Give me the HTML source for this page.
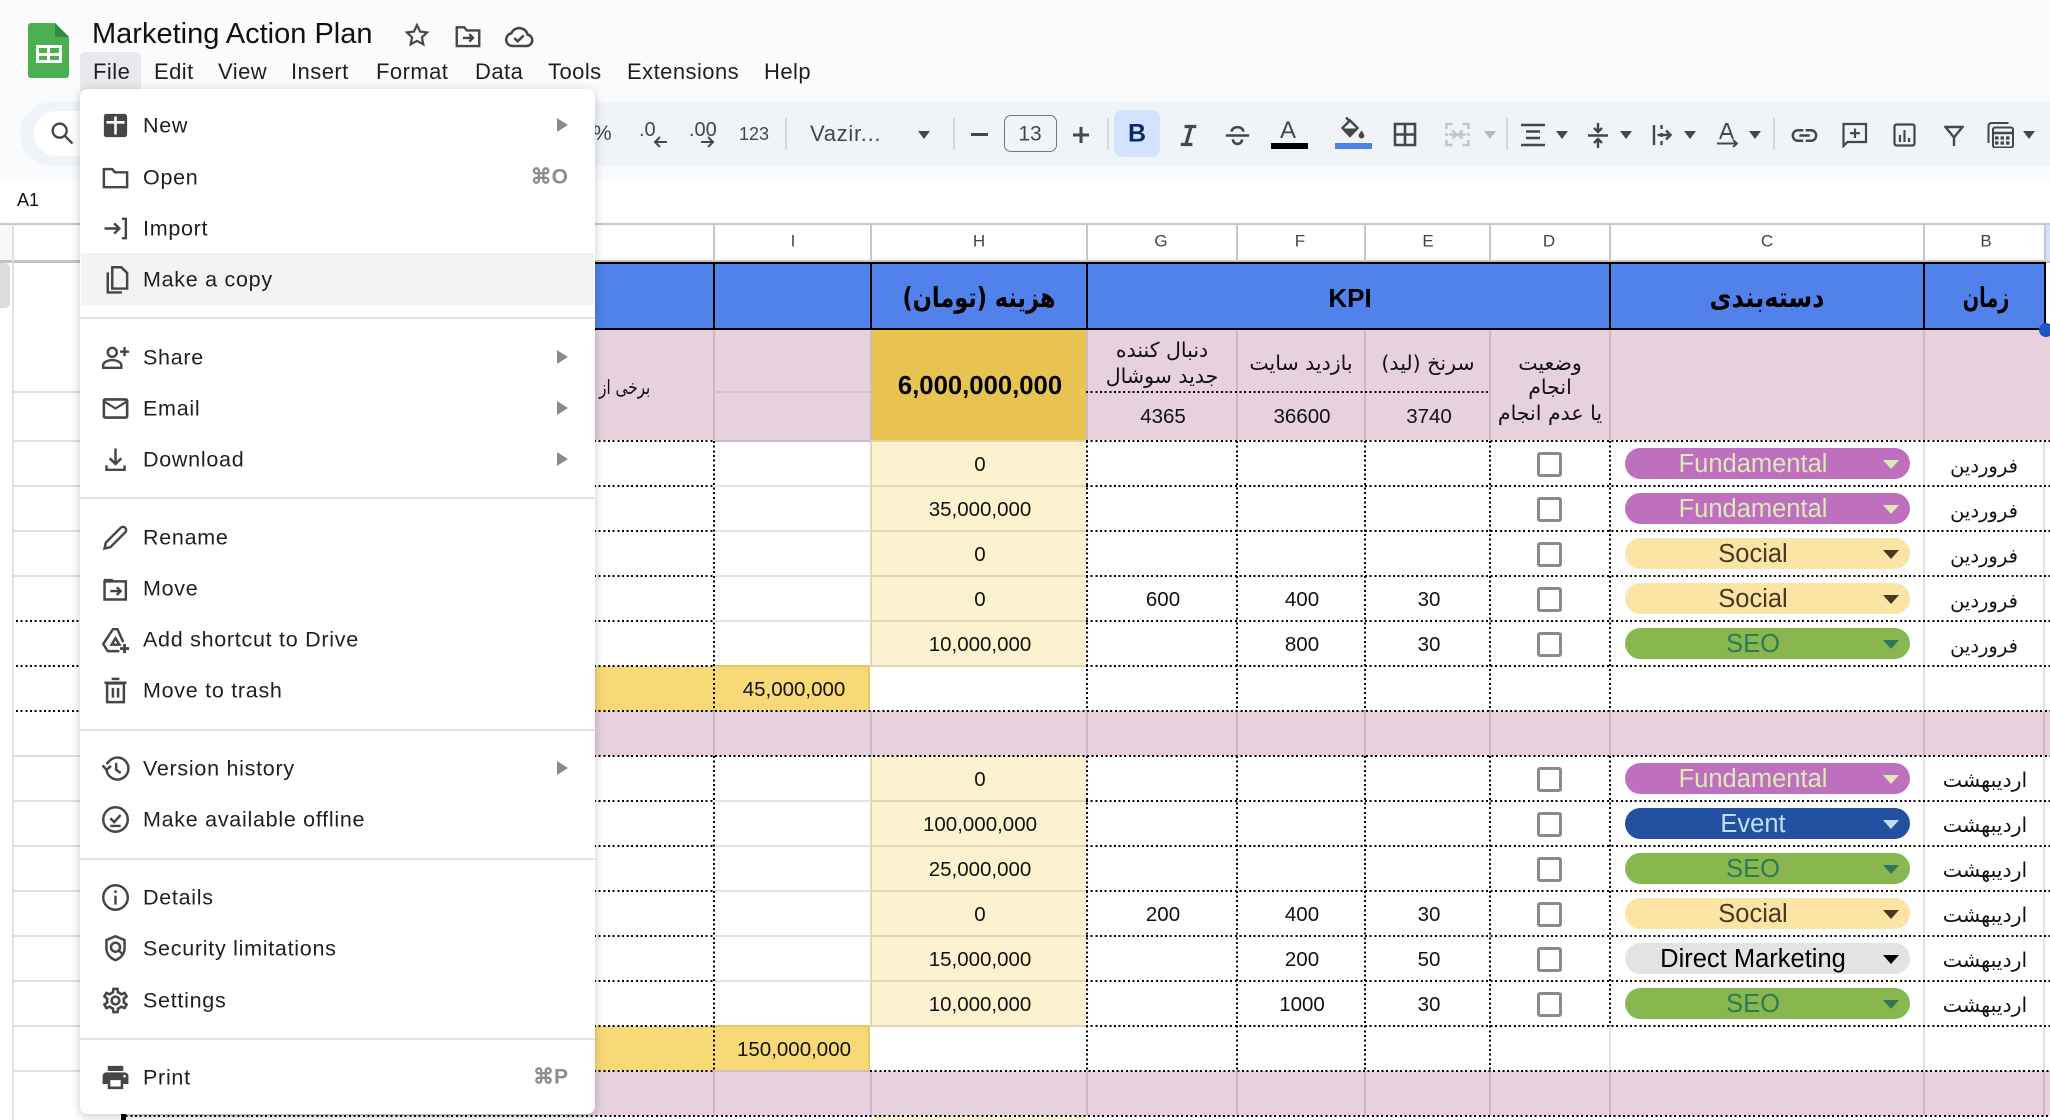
<!DOCTYPE html>
<html lang="en">
<head>
<meta charset="utf-8">
<title>Marketing Action Plan</title>
<style>
html,body{margin:0;padding:0;width:2050px;height:1120px;overflow:hidden;background:#fff}
body{position:relative;font-family:"Liberation Sans",sans-serif;color:#000}
div,span,svg{position:absolute;display:block}
svg *{position:static}
.t{white-space:nowrap;line-height:1}
.c{white-space:nowrap;line-height:1;transform:translate(-50%,-50%)}
.fa{font-family:"DejaVu Sans","Liberation Sans",sans-serif;direction:rtl}
.n{font-size:20.5px;color:#111;margin-top:1.3px}
.hb{font-weight:bold;font-size:24px;color:#000}
.fa14{font-size:20.5px;color:#111}
.mo{font-size:19.5px;color:#111}
.col{font-size:17px;color:#444;top:241px}
.dh{height:2px;background:repeating-linear-gradient(90deg,#000 0 2px,transparent 2px 4.65px)}
.dv{width:2px;background:repeating-linear-gradient(180deg,#000 0 2px,transparent 2px 4.65px)}
.pill{left:1625px;width:285px;height:31px;border-radius:15.5px;text-align:center;font-size:25.5px;line-height:32px;box-sizing:border-box;padding-right:29px;white-space:nowrap}
.pill:after{content:"";position:absolute;left:258px;top:12px;border-left:8px solid transparent;border-right:8px solid transparent;border-top:9px solid currentColor}
.fu{background:#be6fbe;color:#dde9b8}.so{background:#fbe4a4;color:#473822}.se{background:#88b750;color:#2d7a55}.ev{background:#2350a0;color:#bfe1f6}.dm{background:#e3e3e3;color:#000}
.cb{left:1537px;width:25px;height:25px;box-sizing:border-box;border:3px solid #8a8a8a;border-radius:3px;background:#fff}
.m{font-size:21.5px;letter-spacing:.72px;color:#1f1f1f;left:143px;white-space:nowrap;line-height:1;transform:translateY(-50%);margin-top:1px}
.mb{font-size:22px;letter-spacing:.45px;color:#1f1f1f;top:61px;white-space:nowrap;line-height:1}
.ar{left:557px;width:0;height:0;border-top:7px solid transparent;border-bottom:7px solid transparent;border-left:11px solid #8a8a8a;transform:translateY(-50%)}
.sc{font-size:21px;color:#8a8d91;right:1482px;white-space:nowrap;line-height:1;transform:translateY(-50%);font-weight:bold}
.sep{left:80px;width:515px;height:2px;background:#e3e3e3}
.mi{left:100px;width:31px;height:31px;fill:none;stroke:#444746;stroke-width:1.9}
.mif{left:100px;width:31px;height:31px;fill:#444746}
.tb{width:31px;height:31px;top:119.5px;fill:none;stroke:#444746;stroke-width:2}
.tbf{width:31px;height:31px;top:119.5px;fill:#444746}
.car{top:131px;width:0;height:0;border-left:6.5px solid transparent;border-right:6.5px solid transparent;border-top:8px solid #444746}
.vs{top:118px;width:2px;height:32px;background:#d5d8dc}
.ts{color:#444746;white-space:nowrap;line-height:1}
</style>
</head>
<body>

<div style="left:-1px;top:0;width:2052px;height:1120px">
<!-- Grid backgrounds -->
<div style="left:0;top:179px;width:2052px;height:941px;background:#fff"></div>
<div style="left:595px;top:263px;width:1450px;height:66px;background:#5182ec"></div>
<div style="left:595px;top:329px;width:1456px;height:111px;background:#e6d1dd"></div>
<div style="left:871px;top:329px;width:216px;height:111px;background:#e8c34f"></div>
<div style="left:871px;top:441px;width:216px;height:225px;background:#fdf2d0"></div>
<div style="left:871px;top:756px;width:216px;height:270px;background:#fdf2d0"></div>
<div style="left:871px;top:1117px;width:216px;height:3px;background:#fdf2d0"></div>
<div style="left:595px;top:666px;width:276px;height:45px;background:#f8d978"></div>
<div style="left:595px;top:1026px;width:276px;height:45px;background:#f8d978"></div>
<div style="left:595px;top:711px;width:1456px;height:45px;background:#e6d1dd"></div>
<div style="left:122px;top:1071px;width:1929px;height:45px;background:#e6d1dd"></div>

<!-- Column header -->
<div style="left:0;top:223px;width:2052px;height:2px;background:#c7c7c7"></div>
<div style="left:1px;top:225px;width:13px;height:36px;background:#f8f8f8"></div>
<div style="left:0;top:260px;width:2052px;height:3px;background:#c4c4c4"></div>
<div style="left:13px;top:223px;width:2px;height:897px;background:#e0e0e0"></div>
<div style="left:2045px;top:225px;width:6px;height:36px;background:#d3e3fd"></div>
<div style="left:0;top:263px;width:11px;height:45px;background:#dadce0;border-radius:0 5px 5px 0"></div>
<div style="left:714px;top:224px;width:2px;height:37px;background:#c7c7c7"></div>
<div style="left:871px;top:224px;width:2px;height:37px;background:#c7c7c7"></div>
<div style="left:1087px;top:224px;width:2px;height:37px;background:#c7c7c7"></div>
<div style="left:1237px;top:224px;width:2px;height:37px;background:#c7c7c7"></div>
<div style="left:1365px;top:224px;width:2px;height:37px;background:#c7c7c7"></div>
<div style="left:1490px;top:224px;width:2px;height:37px;background:#c7c7c7"></div>
<div style="left:1610px;top:224px;width:2px;height:37px;background:#c7c7c7"></div>
<div style="left:1924px;top:224px;width:2px;height:37px;background:#c7c7c7"></div>
<div style="left:2045px;top:224px;width:2px;height:37px;background:#c7c7c7"></div>

<!-- Row header lines -->
<div style="left:15px;top:391px;width:70px;height:2px;background:#e0e0e0"></div>
<div style="left:15px;top:440px;width:70px;height:2px;background:#e0e0e0"></div>
<div style="left:15px;top:485px;width:70px;height:2px;background:#e0e0e0"></div>
<div style="left:15px;top:530px;width:70px;height:2px;background:#e0e0e0"></div>
<div style="left:15px;top:575px;width:70px;height:2px;background:#e0e0e0"></div>
<div class="dh" style="left:17px;top:620px;width:68px"></div>
<div class="dh" style="left:17px;top:665px;width:68px"></div>
<div class="dh" style="left:17px;top:710px;width:68px"></div>
<div style="left:15px;top:755px;width:70px;height:2px;background:#e0e0e0"></div>
<div style="left:15px;top:800px;width:70px;height:2px;background:#e0e0e0"></div>
<div style="left:15px;top:845px;width:70px;height:2px;background:#e0e0e0"></div>
<div style="left:15px;top:890px;width:70px;height:2px;background:#e0e0e0"></div>
<div style="left:15px;top:935px;width:70px;height:2px;background:#e0e0e0"></div>
<div style="left:15px;top:980px;width:70px;height:2px;background:#e0e0e0"></div>
<div style="left:15px;top:1025px;width:70px;height:2px;background:#e0e0e0"></div>
<div style="left:15px;top:1070px;width:70px;height:2px;background:#e0e0e0"></div>

<!-- Solid vertical grid lines -->
<div style="left:714px;top:329px;width:2px;height:111px;background:#cdb9c6"></div>
<div style="left:871px;top:329px;width:2px;height:111px;background:#cdb9c6"></div>
<div style="left:1087px;top:329px;width:2px;height:111px;background:#cdb9c6"></div>
<div style="left:1237px;top:329px;width:2px;height:111px;background:#cdb9c6"></div>
<div style="left:1365px;top:329px;width:2px;height:111px;background:#cdb9c6"></div>
<div style="left:1490px;top:329px;width:2px;height:111px;background:#cdb9c6"></div>
<div style="left:1610px;top:329px;width:2px;height:111px;background:#cdb9c6"></div>
<div style="left:1924px;top:329px;width:2px;height:111px;background:#cdb9c6"></div>
<div style="left:714px;top:391px;width:157px;height:2px;background:#d5c2ce"></div>

<div style="left:714px;top:711px;width:2px;height:45px;background:#cdb9c6"></div>
<div style="left:871px;top:711px;width:2px;height:45px;background:#cdb9c6"></div>
<div style="left:1087px;top:711px;width:2px;height:45px;background:#cdb9c6"></div>
<div style="left:1237px;top:711px;width:2px;height:45px;background:#cdb9c6"></div>
<div style="left:1365px;top:711px;width:2px;height:45px;background:#cdb9c6"></div>
<div style="left:1490px;top:711px;width:2px;height:45px;background:#cdb9c6"></div>
<div style="left:1610px;top:711px;width:2px;height:45px;background:#cdb9c6"></div>
<div style="left:1924px;top:711px;width:2px;height:45px;background:#cdb9c6"></div>
<div style="left:2044px;top:711px;width:2px;height:45px;background:#cdb9c6"></div>
<div style="left:714px;top:1071px;width:2px;height:45px;background:#cdb9c6"></div>
<div style="left:871px;top:1071px;width:2px;height:45px;background:#cdb9c6"></div>
<div style="left:1087px;top:1071px;width:2px;height:45px;background:#cdb9c6"></div>
<div style="left:1237px;top:1071px;width:2px;height:45px;background:#cdb9c6"></div>
<div style="left:1365px;top:1071px;width:2px;height:45px;background:#cdb9c6"></div>
<div style="left:1490px;top:1071px;width:2px;height:45px;background:#cdb9c6"></div>
<div style="left:1610px;top:1071px;width:2px;height:45px;background:#cdb9c6"></div>
<div style="left:1924px;top:1071px;width:2px;height:45px;background:#cdb9c6"></div>
<div style="left:2044px;top:1071px;width:2px;height:45px;background:#cdb9c6"></div>

<div style="left:871px;top:441px;width:2px;height:225px;background:#e0d8b4"></div>
<div style="left:871px;top:756px;width:2px;height:270px;background:#e0d8b4"></div>
<div style="left:869px;top:666px;width:2px;height:45px;background:#e5c765"></div>
<div style="left:869px;top:1026px;width:2px;height:45px;background:#e5c765"></div>
<div style="left:1924px;top:441px;width:2px;height:270px;background:#e2e2e2"></div>
<div style="left:1924px;top:756px;width:2px;height:315px;background:#e2e2e2"></div>
<div style="left:2044px;top:441px;width:2px;height:270px;background:#e2e2e2"></div>
<div style="left:2044px;top:756px;width:2px;height:315px;background:#e2e2e2"></div>
<div style="left:1610px;top:1026px;width:2px;height:45px;background:#e2e2e2"></div>

<!-- Solid horizontal lines in I and H -->
<div style="left:716px;top:485px;width:155px;height:2px;background:#e3e3e3"></div>
<div style="left:716px;top:530px;width:155px;height:2px;background:#e3e3e3"></div>
<div style="left:716px;top:575px;width:155px;height:2px;background:#e3e3e3"></div>
<div style="left:716px;top:620px;width:155px;height:2px;background:#e3e3e3"></div>
<div style="left:716px;top:665px;width:155px;height:2px;background:#e5c765"></div>
<div style="left:716px;top:800px;width:155px;height:2px;background:#e3e3e3"></div>
<div style="left:716px;top:845px;width:155px;height:2px;background:#e3e3e3"></div>
<div style="left:716px;top:890px;width:155px;height:2px;background:#e3e3e3"></div>
<div style="left:716px;top:935px;width:155px;height:2px;background:#e3e3e3"></div>
<div style="left:716px;top:980px;width:155px;height:2px;background:#e3e3e3"></div>
<div style="left:716px;top:1025px;width:155px;height:2px;background:#e5c765"></div>
<div style="left:716px;top:1070px;width:155px;height:2px;background:#d0bcc8"></div>
<div style="left:716px;top:440px;width:155px;height:2px;background:#cdb9c6"></div>
<div style="left:871px;top:440px;width:216px;height:2px;background:#e2d59a"></div>
<div style="left:871px;top:485px;width:216px;height:2px;background:#e0d8b4"></div>
<div style="left:871px;top:530px;width:216px;height:2px;background:#e0d8b4"></div>
<div style="left:871px;top:575px;width:216px;height:2px;background:#e0d8b4"></div>
<div style="left:871px;top:620px;width:216px;height:2px;background:#e0d8b4"></div>
<div style="left:871px;top:665px;width:216px;height:2px;background:#e0d8b4"></div>
<div style="left:871px;top:800px;width:216px;height:2px;background:#e0d8b4"></div>
<div style="left:871px;top:845px;width:216px;height:2px;background:#e0d8b4"></div>
<div style="left:871px;top:890px;width:216px;height:2px;background:#e0d8b4"></div>
<div style="left:871px;top:935px;width:216px;height:2px;background:#e0d8b4"></div>
<div style="left:871px;top:980px;width:216px;height:2px;background:#e0d8b4"></div>
<div style="left:871px;top:1025px;width:216px;height:2px;background:#e0d8b4"></div>

<!-- Dotted horizontal lines -->
<div class="dh" style="left:595px;top:440px;width:120px"></div><div class="dh" style="left:1087px;top:440px;width:964px"></div>
<div class="dh" style="left:595px;top:485px;width:120px"></div><div class="dh" style="left:1087px;top:485px;width:964px"></div>
<div class="dh" style="left:595px;top:530px;width:120px"></div><div class="dh" style="left:1087px;top:530px;width:964px"></div>
<div class="dh" style="left:595px;top:575px;width:120px"></div><div class="dh" style="left:1087px;top:575px;width:964px"></div>
<div class="dh" style="left:595px;top:620px;width:120px"></div><div class="dh" style="left:1087px;top:620px;width:964px"></div>
<div class="dh" style="left:595px;top:665px;width:120px"></div><div class="dh" style="left:1087px;top:665px;width:964px"></div>
<div class="dh" style="left:595px;top:710px;width:1456px"></div>
<div class="dh" style="left:595px;top:755px;width:1456px"></div>
<div class="dh" style="left:595px;top:800px;width:120px"></div><div class="dh" style="left:1087px;top:800px;width:964px"></div>
<div class="dh" style="left:595px;top:845px;width:120px"></div><div class="dh" style="left:1087px;top:845px;width:964px"></div>
<div class="dh" style="left:595px;top:890px;width:120px"></div><div class="dh" style="left:1087px;top:890px;width:964px"></div>
<div class="dh" style="left:595px;top:935px;width:120px"></div><div class="dh" style="left:1087px;top:935px;width:964px"></div>
<div class="dh" style="left:595px;top:980px;width:120px"></div><div class="dh" style="left:1087px;top:980px;width:964px"></div>
<div class="dh" style="left:595px;top:1025px;width:120px"></div><div class="dh" style="left:1087px;top:1025px;width:964px"></div>
<div class="dh" style="left:595px;top:1070px;width:120px"></div><div class="dh" style="left:871px;top:1070px;width:1180px"></div>
<div class="dh" style="left:122px;top:1115px;width:1929px"></div>
<div style="left:122px;top:1113px;width:5px;height:7px;background:#000"></div>
<div class="dh" style="left:1087px;top:391px;width:403px"></div>

<!-- Dotted vertical lines -->
<div class="dv" style="left:714px;top:441px;height:270px"></div>
<div class="dv" style="left:1087px;top:441px;height:270px"></div>
<div class="dv" style="left:1237px;top:441px;height:270px"></div>
<div class="dv" style="left:1365px;top:441px;height:270px"></div>
<div class="dv" style="left:1490px;top:441px;height:270px"></div>
<div class="dv" style="left:1610px;top:441px;height:270px"></div>
<div class="dv" style="left:714px;top:756px;height:315px"></div>
<div class="dv" style="left:1087px;top:756px;height:315px"></div>
<div class="dv" style="left:1237px;top:756px;height:315px"></div>
<div class="dv" style="left:1365px;top:756px;height:315px"></div>
<div class="dv" style="left:1490px;top:756px;height:315px"></div>
<div class="dv" style="left:1610px;top:756px;height:270px"></div>

<!-- Blue header borders -->
<div style="left:595px;top:262px;width:1452px;height:2px;background:#000"></div>
<div style="left:595px;top:328px;width:1452px;height:2px;background:#000"></div>
<div style="left:714px;top:262px;width:2px;height:68px;background:#000"></div>
<div style="left:871px;top:262px;width:2px;height:68px;background:#000"></div>
<div style="left:1087px;top:262px;width:2px;height:68px;background:#000"></div>
<div style="left:1610px;top:262px;width:2px;height:68px;background:#000"></div>
<div style="left:1924px;top:262px;width:2px;height:68px;background:#000"></div>
<div style="left:2045px;top:262px;width:2px;height:68px;background:#000"></div>
</div>
<div style="left:2039px;top:323px;width:14px;height:14px;border-radius:50%;background:#1a56c4"></div>

<span class="c col" style="left:793px">I</span>
<span class="c col" style="left:979px">H</span>
<span class="c col" style="left:1161px">G</span>
<span class="c col" style="left:1300px">F</span>
<span class="c col" style="left:1428px">E</span>
<span class="c col" style="left:1549px">D</span>
<span class="c col" style="left:1767px">C</span>
<span class="c col" style="left:1986px">B</span>

<!-- Blue header text -->
<span class="c fa hb" style="left:979px;top:298px;transform:translate(-50%,-50%) scale(.935,1.15)">هزینه (تومان)</span>
<span class="c hb" style="left:1350px;top:298px;font-size:26px;font-family:'Liberation Sans',sans-serif">KPI</span>
<span class="c fa hb" style="left:1767px;top:298px;transform:translate(-50%,-50%) scale(1,1.15)">دسته‌بندی</span>
<span class="c fa hb" style="left:1986px;top:298px;transform:translate(-50%,-50%) scale(.8,1.15)">زمان</span>

<!-- Subheader text -->
<span class="c" style="left:980px;top:387px;font-size:25.7px;font-weight:bold">6,000,000,000</span>
<span class="c fa fa14" style="left:1162px;top:350px">دنبال کننده</span>
<span class="c fa fa14" style="left:1162px;top:376px">جدید سوشال</span>
<span class="c fa fa14" style="left:1301px;top:363px">بازدید سایت</span>
<span class="c fa fa14" style="left:1428px;top:363px">سرنخ (لید)</span>
<span class="c fa fa14" style="left:1550px;top:363px">وضعیت</span>
<span class="c fa fa14" style="left:1550px;top:387px">انجام</span>
<span class="c fa fa14" style="left:1550px;top:413px">یا عدم انجام</span>
<span class="c n" style="left:1163px;top:416px">4365</span>
<span class="c n" style="left:1302px;top:416px">36600</span>
<span class="c n" style="left:1429px;top:416px">3740</span>
<span class="t fa" style="right:1400px;top:377px;font-size:20px;color:#111;transform:scaleX(.76);transform-origin:100% 50%">برخی از</span>

<!-- H values -->
<span class="c n" style="left:980px;top:464px">0</span>
<span class="c n" style="left:980px;top:509px">35,000,000</span>
<span class="c n" style="left:980px;top:554px">0</span>
<span class="c n" style="left:980px;top:599px">0</span>
<span class="c n" style="left:980px;top:644px">10,000,000</span>
<span class="c n" style="left:794px;top:689px">45,000,000</span>
<span class="c n" style="left:980px;top:779px">0</span>
<span class="c n" style="left:980px;top:824px">100,000,000</span>
<span class="c n" style="left:980px;top:869px">25,000,000</span>
<span class="c n" style="left:980px;top:914px">0</span>
<span class="c n" style="left:980px;top:959px">15,000,000</span>
<span class="c n" style="left:980px;top:1004px">10,000,000</span>
<span class="c n" style="left:794px;top:1049px">150,000,000</span>

<!-- KPI values -->
<span class="c n" style="left:1163px;top:599px">600</span>
<span class="c n" style="left:1302px;top:599px">400</span>
<span class="c n" style="left:1429px;top:599px">30</span>
<span class="c n" style="left:1302px;top:644px">800</span>
<span class="c n" style="left:1429px;top:644px">30</span>
<span class="c n" style="left:1163px;top:914px">200</span>
<span class="c n" style="left:1302px;top:914px">400</span>
<span class="c n" style="left:1429px;top:914px">30</span>
<span class="c n" style="left:1302px;top:959px">200</span>
<span class="c n" style="left:1429px;top:959px">50</span>
<span class="c n" style="left:1302px;top:1004px">1000</span>
<span class="c n" style="left:1429px;top:1004px">30</span>

<!-- Checkboxes -->
<div class="cb" style="top:452px"></div>
<div class="cb" style="top:497px"></div>
<div class="cb" style="top:542px"></div>
<div class="cb" style="top:587px"></div>
<div class="cb" style="top:632px"></div>
<div class="cb" style="top:767px"></div>
<div class="cb" style="top:812px"></div>
<div class="cb" style="top:857px"></div>
<div class="cb" style="top:902px"></div>
<div class="cb" style="top:947px"></div>
<div class="cb" style="top:992px"></div>

<!-- Pills -->
<div class="pill fu" style="top:448px">Fundamental</div>
<div class="pill fu" style="top:493px">Fundamental</div>
<div class="pill so" style="top:538px">Social</div>
<div class="pill so" style="top:583px">Social</div>
<div class="pill se" style="top:628px">SEO</div>
<div class="pill fu" style="top:763px">Fundamental</div>
<div class="pill ev" style="top:808px">Event</div>
<div class="pill se" style="top:853px">SEO</div>
<div class="pill so" style="top:898px">Social</div>
<div class="pill dm" style="top:943px">Direct Marketing</div>
<div class="pill se" style="top:988px">SEO</div>

<!-- Month column -->
<span class="c fa mo" style="left:1984px;top:466px">فروردین</span>
<span class="c fa mo" style="left:1984px;top:511px">فروردین</span>
<span class="c fa mo" style="left:1984px;top:556px">فروردین</span>
<span class="c fa mo" style="left:1984px;top:601px">فروردین</span>
<span class="c fa mo" style="left:1984px;top:646px">فروردین</span>
<span class="c fa fa14" style="left:1985px;top:780px">اردیبهشت</span>
<span class="c fa fa14" style="left:1985px;top:825px">اردیبهشت</span>
<span class="c fa fa14" style="left:1985px;top:870px">اردیبهشت</span>
<span class="c fa fa14" style="left:1985px;top:915px">اردیبهشت</span>
<span class="c fa fa14" style="left:1985px;top:960px">اردیبهشت</span>
<span class="c fa fa14" style="left:1985px;top:1005px">اردیبهشت</span>

<!-- App header -->
<div style="left:0;top:0;width:2050px;height:179px;background:#f9fbfd"></div>
<div style="left:20px;top:102px;width:2060px;height:64px;border-radius:32px;background:#f0f4f9"></div>
<div style="left:34px;top:111px;width:120px;height:45px;border-radius:23px;background:#fff"></div>
<svg style="left:48px;top:119px" width="28" height="28" viewBox="0 0 24 24" fill="none" stroke="#444746" stroke-width="2"><circle cx="10" cy="10" r="6"/><path d="M14.5 14.5L21 21"/></svg>

<!-- Logo -->
<svg style="left:28px;top:23px" width="41" height="55" viewBox="0 0 41 55"><path d="M3 0H27L41 14V52a3 3 0 0 1-3 3H3a3 3 0 0 1-3-3V3a3 3 0 0 1 3-3z" fill="#4caf50"/><path d="M27 0L41 14H27z" fill="#2f8a3c"/><path fill-rule="evenodd" d="M8 22H34V40H8zM11 25V30H19V25zM22 25V30H31V25zM11 33V37H19V33zM22 33V37H31V33z" fill="#fff"/></svg>

<span class="t" style="left:92px;top:20px;font-size:29px;color:#111">Marketing Action Plan</span>
<svg style="left:403px;top:21px;fill:none;stroke:#444746;stroke-width:1.9" width="28" height="28" viewBox="0 0 24 24"><path d="M12 3.500l2.600 5.600 6 .7-4.400 4.200 1.200 6L12 17l-5.400 3 1.200-6L3.400 9.800l6-.7z"/></svg>
<svg style="left:453px;top:21px;fill:none;stroke:#444746;stroke-width:1.9" width="30" height="30" viewBox="0 0 24 24"><path d="M3 20V5h6l2 2.500h10V20z"/><path d="M8 13.500h8M13 10.500l3 3-3 3"/></svg>
<svg style="left:503px;top:20px;fill:none;stroke:#444746;stroke-width:1.9" width="32" height="32" viewBox="0 0 24 24"><path d="M7 19.500a4.800 4.800 0 0 1-.8-9.500A6.500 6.500 0 0 1 18.500 11a4.300 4.300 0 0 1-.5 8.500z"/><path d="M8.500 13.500l2.500 2.500 4.500-4.500"/></svg>

<!-- Menubar -->
<div style="left:80px;top:52px;width:61px;height:40px;background:#e7e9ec;border-radius:6px 6px 0 0"></div>
<span class="mb" style="left:93px">File</span>
<span class="mb" style="left:154px">Edit</span>
<span class="mb" style="left:218px">View</span>
<span class="mb" style="left:291px">Insert</span>
<span class="mb" style="left:376px">Format</span>
<span class="mb" style="left:475px">Data</span>
<span class="mb" style="left:548px">Tools</span>
<span class="mb" style="left:627px">Extensions</span>
<span class="mb" style="left:764px">Help</span>

<!-- A1 / formula bar -->
<span class="t" style="left:17px;top:191px;font-size:18px;color:#111">A1</span>

<!-- Toolbar -->
<span class="ts" style="left:593px;top:123px;font-size:21px">%</span>
<span class="ts" style="left:639px;top:120px;font-size:20px">.0</span>
<svg style="left:652px;top:134px" width="16" height="16" viewBox="0 0 16 16" fill="none" stroke="#444746" stroke-width="2"><path d="M15 8H3M8 3L3 8l5 5"/></svg>
<span class="ts" style="left:689px;top:120px;font-size:20px">.00</span>
<svg style="left:700px;top:134px" width="16" height="16" viewBox="0 0 16 16" fill="none" stroke="#444746" stroke-width="2"><path d="M1 8h12M8 3l5 5-5 5"/></svg>
<span class="ts" style="left:739px;top:125px;font-size:18px">123</span>
<div class="vs" style="left:785px"></div>
<span class="ts" style="left:810px;top:123px;font-size:22px;letter-spacing:.7px">Vazir...</span>
<div class="car" style="left:918px"></div>
<div class="vs" style="left:953px"></div>
<div style="left:971px;top:133px;width:17px;height:3px;background:#444746"></div>
<div style="left:1004px;top:115px;width:53px;height:37px;box-sizing:border-box;border:1.5px solid #747775;border-radius:7px"></div>
<span class="c" style="left:1030px;top:134px;font-size:21px;color:#444746">13</span>
<svg style="left:1071px;top:125px" width="20" height="20" viewBox="0 0 20 20" stroke="#444746" stroke-width="3"><path d="M10 2v16M2 10h16"/></svg>
<div class="vs" style="left:1107px"></div>
<div style="left:1114px;top:110px;width:46px;height:47px;border-radius:8px;background:#d3e3fd"></div>
<span class="c" style="left:1137px;top:134px;font-size:25px;font-weight:bold;color:#0b2a66">B</span>
<svg class="tb" style="left:1172.5px" viewBox="0 0 24 24"><path d="M9 5h9M6 19h9M14 5l-4 14" stroke-width="2.5"/></svg>
<svg class="tb" style="left:1221.5px" viewBox="0 0 24 24"><path d="M3 12h18M7.500 9c0-2 2-3.500 4.500-3.500S16.500 7 16.500 9M8.500 15c0 2 1.500 3.500 3.500 3.500s3.500-1.500 3.500-3.500"/></svg>
<span class="c" style="left:1288px;top:131px;font-size:24px;color:#444746">A</span>
<div style="left:1271px;top:143px;width:37px;height:6px;background:#000"></div>

<!-- Fill colour -->
<svg style="left:1340px;top:116px" width="26" height="25" viewBox="0 0 26 25" fill="none" stroke="#444746"><path d="M6 1.500l7 7" stroke-width="2.4"/><path d="M2.500 12L10 4.500 17.500 12 10 20z" stroke-width="2.4" fill="#f0f4f9"/><path d="M2 12.500h16L10 21z" fill="#444746" stroke="none"/><path d="M21.500 14.500c-1.500 2.200-2.800 3.600-2.800 5.200a2.800 2.800 0 0 0 5.600 0c0-1.600-1.300-3-2.800-5.200z" fill="#444746" stroke="none"/></svg>
<div style="left:1335px;top:143px;width:37px;height:6px;background:#4e81ec"></div>
<!-- Borders -->
<svg style="left:1393px;top:122px" width="24" height="25" viewBox="0 0 24 25" fill="none" stroke="#444746" stroke-width="2.6"><path d="M2 2h20v21H2zM12 2v21M2 12.500h20"/></svg>
<!-- Merge -->
<svg style="left:1445px;top:122px" width="25" height="25" viewBox="0 0 25 25" fill="none" stroke="#c4c6c8" stroke-width="2.6"><path d="M1.500 7V2h6M17.500 2h6v5M1.500 18v5h6M17.500 23h6v-5M1.500 11v3M23.500 11v3M4 12.500h6M7.500 8.500l4 4-4 4M21 12.500h-6M17.500 8.500l-4 4 4 4"/></svg>
<div class="car" style="left:1484px;border-top-color:#b5b7b9"></div>
<div class="vs" style="left:1506px"></div>
<!-- Align -->
<svg style="left:1521px;top:123px" width="24" height="24" viewBox="0 0 24 24" stroke="#444746" stroke-width="2.4"><path d="M0 2h24M5 8.500h14M5 15h14M0 22h24"/></svg>
<div class="car" style="left:1556px"></div>
<!-- Vertical align -->
<svg style="left:1588px;top:122px" width="20" height="27" viewBox="0 0 20 27" fill="none" stroke="#444746" stroke-width="2.4"><path d="M0 13.500h20M10 1v8M6 6l4 4 4-4M10 26v-8M6 21l4-4 4 4"/></svg>
<div class="car" style="left:1620px"></div>
<!-- Wrap -->
<svg style="left:1652px;top:125px" width="20" height="20" viewBox="0 0 20 20" fill="none" stroke="#444746" stroke-width="2.4"><path d="M2 0v20M9.500 0v4M9.500 8v4M9.500 16v4M5.500 10h13M14 5.500l4.500 4.500-4.500 4.500"/></svg>
<div class="car" style="left:1684px"></div>
<!-- Rotate -->
<svg style="left:1716px;top:122px" width="22" height="27" viewBox="0 0 22 27" fill="none" stroke="#444746" stroke-width="1.9"><path d="M4 17L10 2h1.500L17 17M6 12h9.500M1 21.500h19M17 18l4 3.500-4 3.500"/></svg>
<div class="car" style="left:1749px"></div>
<div class="vs" style="left:1773px"></div>
<!-- Link -->
<svg class="tbf" style="left:1788.5px" viewBox="0 0 24 24"><path d="M3.900 12c0-1.710 1.390-3.100 3.100-3.100h4V7H7c-2.760 0-5 2.240-5 5s2.240 5 5 5h4v-1.900H7c-1.710 0-3.100-1.390-3.100-3.100zM8 13h8v-2H8v2zm9-6h-4v1.900h4c1.710 0 3.100 1.390 3.100 3.100s-1.390 3.100-3.100 3.100h-4V17h4c2.760 0 5-2.240 5-5s-2.240-5-5-5z"/></svg>
<!-- Comment -->
<svg style="left:1841px;top:122px" width="27" height="26" viewBox="0 0 27 26" fill="none" stroke="#444746" stroke-width="2.2"><path d="M2.500 2h22.500v18H6.500l-4 4zM14 6.500v9.500M9 11.200h10"/></svg>
<!-- Chart -->
<svg style="left:1893px;top:123px" width="23" height="24" viewBox="0 0 23 24" fill="none" stroke="#444746" stroke-width="2.2"><rect x="1.500" y="1.500" width="20" height="21" rx="2"/><path d="M7 12v7M11.500 7v12M16 15v4"/></svg>
<!-- Filter -->
<svg style="left:1944px;top:125px" width="20" height="21" viewBox="0 0 20 21" fill="none" stroke="#444746" stroke-width="2.4"><path d="M1.500 2h17L10 12.500zM10 12.500V21"/></svg>
<!-- Function list -->
<svg style="left:1987px;top:122px" width="27" height="26" viewBox="0 0 27 26" fill="none" stroke="#444746" stroke-width="2"><path d="M1.500 21V4a3 3 0 0 1 3-3h17"/><rect x="6" y="5.500" width="20" height="20" rx="2"/><path d="M6 11h20" stroke-width="2.4"/><path d="M8 16h16M8 21h16" stroke-width="3.200" stroke-dasharray="3.500 2"/></svg>
<div class="car" style="left:2023px"></div>

<!-- File menu -->
<div style="left:80px;top:89px;width:515px;height:1025px;background:#fff;border-radius:8px;box-shadow:0 2px 10px rgba(0,0,0,.22)"></div>
<div style="left:81px;top:253px;width:513px;height:52px;background:#f1f3f4"></div>
<div class="sep" style="top:317px"></div>
<div class="sep" style="top:497px"></div>
<div class="sep" style="top:729px"></div>
<div class="sep" style="top:858px"></div>
<div class="sep" style="top:1038px"></div>

<span class="m" style="top:125px">New</span>
<span class="m" style="top:177px">Open</span>
<span class="m" style="top:228px">Import</span>
<span class="m" style="top:279px">Make a copy</span>
<span class="m" style="top:357px">Share</span>
<span class="m" style="top:408px">Email</span>
<span class="m" style="top:459px">Download</span>
<span class="m" style="top:537px">Rename</span>
<span class="m" style="top:588px">Move</span>
<span class="m" style="top:639px">Add shortcut to Drive</span>
<span class="m" style="top:690px">Move to trash</span>
<span class="m" style="top:768px">Version history</span>
<span class="m" style="top:819px">Make available offline</span>
<span class="m" style="top:897px">Details</span>
<span class="m" style="top:948px">Security limitations</span>
<span class="m" style="top:1000px">Settings</span>
<span class="m" style="top:1077px">Print</span>

<div class="ar" style="top:125px"></div>
<div class="ar" style="top:357px"></div>
<div class="ar" style="top:408px"></div>
<div class="ar" style="top:459px"></div>
<div class="ar" style="top:768px"></div>
<span class="sc" style="top:177px">⌘O</span>
<span class="sc" style="top:1077px">⌘P</span>

<svg class="mif" style="top:109.5px" viewBox="0 0 24 24"><rect x="3" y="3" width="18" height="18" rx="2"/><path d="M5 9.500h14M12 5v14" stroke="#fff" stroke-width="2"/></svg>
<svg class="mi" style="top:161.5px" viewBox="0 0 24 24"><path d="M3 5.500h6.500l2 2.500H21v11.500H3z"/></svg>
<svg class="mi" style="top:212.5px" viewBox="0 0 24 24"><path d="M3.500 12h11M11 8l4 4-4 4M17 4.500h3v15h-3"/></svg>
<svg class="mi" style="top:263.5px" viewBox="0 0 24 24"><path d="M9.500 2.500h7l4.500 4.500v12H9.500V2.500zM6 6.500v15.500h11"/></svg>
<svg class="mi" style="top:341.5px" viewBox="0 0 24 24"><circle cx="9.500" cy="8" r="3.500"/><path d="M2.500 20v-2c0-2.500 4-4 7-4s7 1.500 7 4v2zM19 4v7M15.500 7.500h7"/></svg>
<svg class="mif" style="top:392.5px" viewBox="0 0 24 24"><path d="M20 4H4c-1.100 0-2 .9-2 2v12c0 1.100.9 2 2 2h16c1.100 0 2-.9 2-2V6c0-1.100-.9-2-2-2zm0 14H4V8l8 5 8-5v10zm-8-7L4 6h16l-8 5z"/></svg>
<svg class="mi" style="top:443.5px" viewBox="0 0 24 24"><path d="M12 3.500v11.500M7.500 11l4.500 4.500 4.500-4.500M5 16.500V20h14v-3.500"/></svg>
<svg class="mi" style="top:521.5px" viewBox="0 0 24 24"><path d="M3.500 20.500l1-4.500L16 4.500c1-1 2.500-1 3.500 0s1 2.500 0 3.500L8 19.500z"/></svg>
<svg class="mi" style="top:572.5px" viewBox="0 0 24 24"><path d="M3.500 20.500V6.500h16.500v14z"/><path d="M3 7V4.500h6.500L12 7z" fill="#444746" stroke="none"/><path d="M8 14h8M13 11l3 3-3 3"/></svg>
<svg class="mi" style="top:623.5px" viewBox="0 0 24 24"><path d="M15 16H9l3-5zM18 14L13.500 4h-3.500L2.500 15.500 6 21h9"/><path d="M19 15.500v7M15.500 19h7" stroke-width="2.2"/></svg>
<svg class="mi" style="top:674.5px" viewBox="0 0 24 24"><path d="M5.500 6.500h13V21h-13zM3.500 6h17M9 3h6M10 10v7.500M14 10v7.500"/></svg>
<svg class="mi" style="top:752.5px" viewBox="0 0 24 24"><path d="M5 12.500a8.500 8.500 0 1 0 2.500-6.500L5 8.500"/><path d="M2 9.500l3 3.500 3.500-3M12.500 7.500v5.500l3.500 2.500"/></svg>
<svg class="mi" style="top:803.5px" viewBox="0 0 24 24"><circle cx="12" cy="12" r="9.500"/><path d="M8 11l3 3 5-5.500M8 17h8"/></svg>
<svg class="mi" style="top:881.5px" viewBox="0 0 24 24"><circle cx="12" cy="12" r="9.500"/><path d="M12 10.500v7M12 6.500v2"/></svg>
<svg class="mi" style="top:932.5px" viewBox="0 0 24 24"><path d="M12 2.500l7 3v6.500c0 4.300-3 7.500-7 9-4-1.500-7-4.700-7-9V5.500z"/><circle cx="12" cy="11" r="3.500"/><path d="M14.500 13.500l3 3"/></svg>
<svg class="mif" style="top:984.5px" viewBox="0 0 24 24"><path d="M19.430 12.980c.04-.32.07-.64.07-.98 0-.34-.03-.66-.07-.98l2.110-1.650c.19-.15.24-.42.12-.64l-2-3.460c-.09-.16-.26-.25-.44-.25-.06 0-.12.01-.17.030l-2.490 1c-.52-.4-1.080-.73-1.690-.98l-.38-2.650C14.460 2.180 14.250 2 14 2h-4c-.25 0-.46.18-.49.42l-.38 2.650c-.61.25-1.170.59-1.690.98l-2.490-1c-.06-.02-.12-.03-.18-.03-.17 0-.34.09-.43.25l-2 3.460c-.13.22-.07.49.12.64l2.110 1.650c-.04.32-.07.65-.07.98 0 .33.03.66.07.98l-2.110 1.650c-.19.15-.24.42-.12.64l2 3.460c.09.16.26.25.44.25.06 0 .12-.01.17-.03l2.490-1c.52.4 1.080.73 1.690.98l.38 2.650c.03.24.24.42.49.42h4c.25 0 .46-.18.49-.42l.38-2.650c.61-.25 1.170-.59 1.690-.98l2.490 1c.06.02.12.03.18.03.17 0 .34-.09.43-.25l2-3.460c.12-.22.07-.49-.12-.64l-2.110-1.650zm-1.980-1.710c.04.31.05.52.05.73 0 .21-.02.43-.05.73l-.14 1.130.89.7 1.080.84-.7 1.210-1.270-.51-1.040-.42-.9.68c-.43.32-.84.56-1.250.73l-1.060.43-.16 1.130-.2 1.350h-1.400l-.19-1.350-.16-1.130-1.060-.43c-.43-.18-.83-.41-1.230-.71l-.91-.7-1.060.43-1.270.51-.7-1.210 1.080-.84.89-.7-.14-1.130c-.03-.31-.05-.54-.05-.74s.02-.43.05-.73l.14-1.130-.89-.7-1.080-.84.7-1.210 1.270.51 1.040.42.9-.68c.43-.32.84-.56 1.250-.73l1.060-.43.16-1.130.2-1.350h1.390l.19 1.350.16 1.130 1.060.43c.43.18.83.41 1.230.71l.91.7 1.060-.43 1.270-.51.7 1.210-1.070.85-.89.7.14 1.130zM12 8c-2.210 0-4 1.790-4 4s1.790 4 4 4 4-1.790 4-4-1.790-4-4-4zm0 6c-1.100 0-2-.9-2-2s.9-2 2-2 2 .9 2 2-.9 2-2 2z"/></svg>
<svg class="mif" style="top:1061.5px" viewBox="0 0 24 24"><path d="M19 8H5c-1.660 0-3 1.340-3 3v6h4v4h12v-4h4v-6c0-1.660-1.340-3-3-3zm-3 11H8v-5h8v5zm3-7c-.55 0-1-.45-1-1s.45-1 1-1 1 .45 1 1-.45 1-1 1zm-1-9H6v4h12V3z"/></svg>

</body>
</html>
